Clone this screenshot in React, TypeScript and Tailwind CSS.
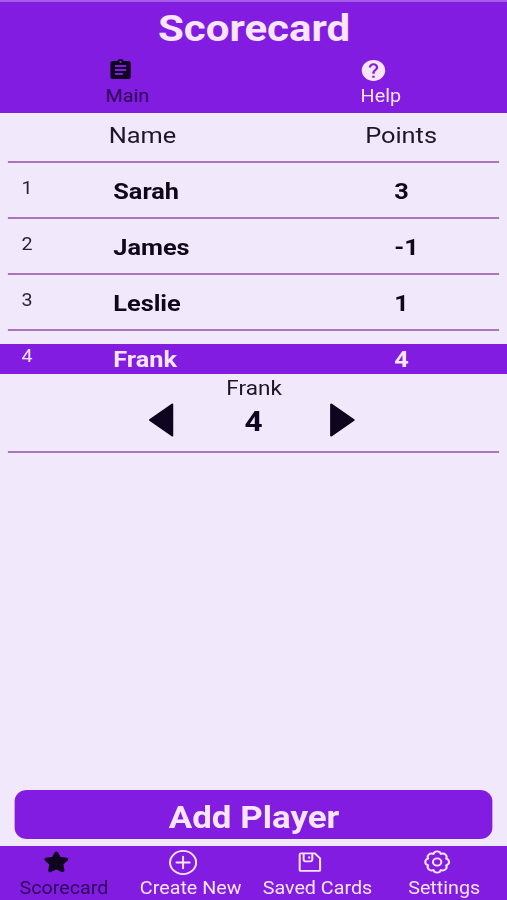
import type { ReactNode } from 'react';
import { MdAssignment, MdHelp } from 'react-icons/md';

interface Player {
  id: number;
  name: string;
  points: number;
}

const players: Player[] = [
  { id: 1, name: 'Sarah', points: 3 },
  { id: 2, name: 'James', points: -1 },
  { id: 3, name: 'Leslie', points: 1 },
  { id: 4, name: 'Frank', points: 4 },
];

const selectedId = 4;

function StarIcon() {
  return (
    <svg viewBox="0 0 24 24" className="ml-px size-6" fill="currentColor" stroke="currentColor" strokeWidth="3.4" strokeLinejoin="round">
      <path d="M12 3.2l2.6 5.3 6.3.9-4.4 4.5 1 6.5-5.5-2.8-5.5 2.8 1-6.5-4.4-4.5 6.3-.9z" />
    </svg>
  );
}

function PlusCircleIcon() {
  return (
    <svg viewBox="0 0 24 24" className="size-[25px]" fill="none" stroke="currentColor" strokeWidth="1.7" strokeLinecap="round">
      <circle cx="12" cy="12" r="11.1" />
      <path d="M12 6.4v11.2M6.4 12h11.2" />
    </svg>
  );
}

function SaveIcon() {
  return (
    <svg viewBox="0 0 24 24" className="size-6" fill="none" stroke="currentColor" strokeWidth="1.8" strokeLinejoin="round">
      <path d="M4 3.4h12.4l4.7 4.9v11.6a1 1 0 0 1-1 1H4a1 1 0 0 1-1-1V4.4a1 1 0 0 1 1-1z" />
      <path d="M6.5 3.6v6a1.8 1.8 0 0 0 1.8 1.8h4.1a1.8 1.8 0 0 0 1.8-1.8v-6" />
      <path d="M11.4 6.4v2" />
    </svg>
  );
}

function GearIcon() {
  return (
    <svg viewBox="0 0 24 24" className="ml-px size-6" fill="none" stroke="currentColor" strokeWidth="1.8" strokeLinejoin="round">
      <path d="M8.7 4.05A3.4 3.4 0 0 1 15.3 4.05 3.4 3.4 0 0 1 19.95 8.7 3.4 3.4 0 0 1 19.95 15.3 3.4 3.4 0 0 1 15.3 19.95 3.4 3.4 0 0 1 8.7 19.95 3.4 3.4 0 0 1 4.05 15.3 3.4 3.4 0 0 1 4.05 8.7 3.4 3.4 0 0 1 8.7 4.05z" />
      <circle cx="12" cy="12" r="3.7" />
    </svg>
  );
}

function Arrow({ flip }: { flip?: boolean }) {
  return (
    <svg
      viewBox="0 0 22 34"
      className={`h-[34px] w-[22px] ${flip ? '-scale-x-100' : ''}`}
      fill="currentColor"
      stroke="currentColor"
      strokeWidth="2"
      strokeLinejoin="round"
    >
      <path d="M21 1.5v31L1.2 17z" />
    </svg>
  );
}

function Tab({ label, active, children }: { label: string; active?: boolean; children: ReactNode }) {
  return (
    <button className={`flex flex-1 flex-col items-center ${active ? 'text-[#10051f]' : 'text-[#f7e4fd]'}`}>
      <span className="mr-[13px] flex h-6 items-center">{children}</span>
      <span
        className={`pt-[3px] pl-px text-[17.5px] leading-[22px] whitespace-nowrap ${active ? 'text-[#2c0a58]' : ''}`}
      >
        {label}
      </span>
    </button>
  );
}

function PlayerRow({ player }: { player: Player }) {
  const selected = player.id === selectedId;
  return (
    <div
      className={`flex h-[30px] items-center text-[22.5px] font-bold ${
        selected ? 'bg-[#821ce0] text-[#f7e4fd]' : 'text-[#10071c]'
      }`}
    >
      <span
        className={`w-[100.5px] pb-[5px] pl-[19px] text-[17.5px] font-normal ${
          selected ? 'text-[#f7e4fd]' : 'text-[#2b2336]'
        }`}
      >
        {player.id}
      </span>
      <span className="w-[249.5px] pt-0.5">{player.name}</span>
      <span className="pt-0.5">{player.points}</span>
    </div>
  );
}

function Divider() {
  return <div className="mx-[7px] h-0.5 bg-[#aa78ba]" />;
}

export default function App() {
  const selected = players.find((p) => p.id === selectedId)!;

  return (
    <div className="h-[900px] w-[507px] overflow-hidden bg-[#f2e8fb]">
      <div className="flex h-[900px] w-[450px] origin-left scale-x-[1.12667] flex-col font-['Roboto',sans-serif] text-[#1d1528]">
        <header className="h-[113px] border-t-2 border-[#a55ce8] bg-[#821ce0]">
          <h1 className="h-14 pl-px text-center text-[37.3px] leading-[52px] font-bold text-[#f7e4fd]">Scorecard</h1>
          <nav className="flex">
            <Tab label="Main" active>
              <MdAssignment className="ml-px size-6" />
            </Tab>
            <Tab label="Help">
              <MdHelp className="size-[25px]" />
            </Tab>
          </nav>
        </header>

        <div className="flex h-12 items-center pb-0.5 text-[22.5px]">
          <span className="w-[253px] text-center">Name</span>
          <span className="flex-1 pl-[9px] text-center">Points</span>
        </div>
        <Divider />

        <main className="flex-1">
          {players.map((player) => (
            <div key={player.id}>
              <div className="pt-[13px] pb-[11px]">
                <PlayerRow player={player} />
              </div>
              {player.id !== selectedId && <Divider />}
            </div>
          ))}
          <div className="-mt-[11px] flex h-[77px] flex-col items-center">
            <span className="pl-px text-xl leading-7">{selected.name}</span>
            <div className="flex h-9 items-center pr-[3px] text-[#10051f]">
              <Arrow />
              <span className="w-[139px] pt-[3px] pl-[3px] text-center text-[28px] font-bold">{selected.points}</span>
              <Arrow flip />
            </div>
          </div>
          <Divider />
        </main>

        <div className="px-[13px] pb-[7px]">
          <button className="h-[49px] w-full rounded-[11px] bg-[#821ce0] pt-[5px] pl-px text-[31px] leading-none font-bold text-[#f7e4fd]">
            Add Player
          </button>
        </div>

        <footer className="flex h-[54px] bg-[#821ce0] pt-1">
          <Tab label="Scorecard" active>
            <StarIcon />
          </Tab>
          <Tab label="Create New">
            <PlusCircleIcon />
          </Tab>
          <Tab label="Saved Cards">
            <SaveIcon />
          </Tab>
          <Tab label="Settings">
            <GearIcon />
          </Tab>
        </footer>
      </div>
    </div>
  );
}
